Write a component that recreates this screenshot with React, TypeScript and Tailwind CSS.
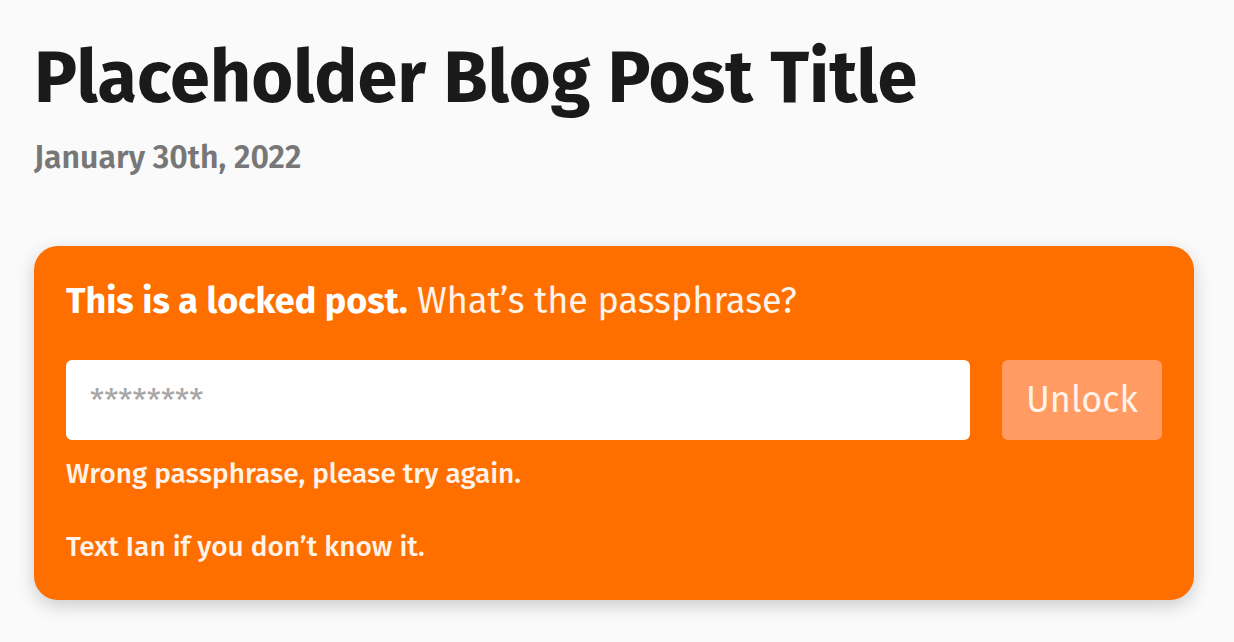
import { useState } from "react";

export default function App() {
  const [pass, setPass] = useState("");

  return (
    <div
      className="min-h-screen bg-[#fafafa] px-[34px] pt-[36px]"
      style={{ fontFamily: '"Fira Sans", "Open Sans", "Noto Sans", sans-serif' }}
    >
      {/* Post header */}
      <h1 className="text-[72px] font-bold leading-[84px] text-[#1a1a1a]">
        Placeholder Blog Post Title
      </h1>
      <div className="mt-[17px] text-[32px] font-semibold leading-[40px] text-[#777777]">
        January 30th, 2022
      </div>

      {/* Locked post card */}
      <div className="mt-[69px] w-[1160px] rounded-[24px] bg-[#ff6f00] px-[32px] pt-[31px] pb-[35px] text-[#fff3ea] shadow-[0_6px_18px_rgba(0,0,0,0.18)]">
        <p className="text-[36px] leading-[48px]">
          <span className="font-bold text-white">This is a locked post.</span> What’s the passphrase?
        </p>

        <form className="mt-[35px] flex gap-[32px]" onSubmit={(e) => e.preventDefault()}>
          <input
            type="password"
            value={pass}
            onChange={(e) => setPass(e.target.value)}
            placeholder="********"
            className="h-[80px] flex-1 rounded-[6px] bg-white px-[24px] text-[32px] text-[#333] placeholder:text-[#a6a6a6] focus:outline-none"
          />
          <button
            type="submit"
            className="h-[80px] w-[160px] rounded-[6px] bg-[#ff9b63] text-[36px] text-[#fff3ea]"
          >
            Unlock
          </button>
        </form>

        <div className="mt-[16px] text-[28px] font-medium leading-[36px]">
          Wrong passphrase, please try again.
        </div>
        <div className="mt-[37px] text-[28px] font-medium leading-[36px]">
          Text Ian if you don’t know it.
        </div>
      </div>
    </div>
  );
}
